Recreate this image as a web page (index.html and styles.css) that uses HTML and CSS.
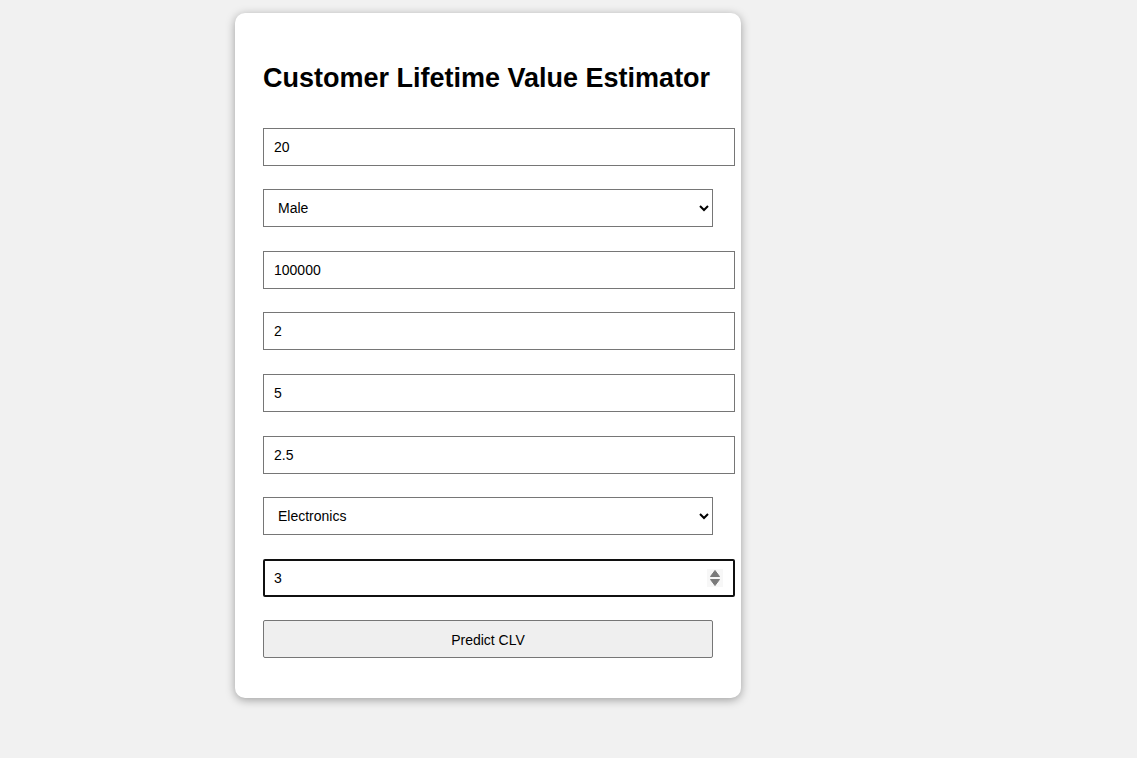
FILE: index.html
```html
<!DOCTYPE html>
<html lang="en">
<head>
<meta charset="utf-8">
<title>Customer Lifetime Value Estimator</title>
<link rel="stylesheet" href="styles.css">
</head>
<body>
  <div class="card">
    <h2 class="title">Customer Lifetime Value Estimator</h2>
    <form class="form">
      <input class="field" type="number" value="20">
      <select class="choice">
        <option>Male</option>
        <option>Female</option>
      </select>
      <input class="field" type="number" value="100000">
      <input class="field" type="number" value="2">
      <input class="field" type="number" value="5">
      <input class="field" type="number" value="2.5">
      <select class="choice">
        <option>Electronics</option>
        <option>Clothing</option>
      </select>
      <div class="spin-wrap">
        <input class="field field-focus" type="number" value="3">
        <svg class="spinner" width="16" height="18" viewBox="0 0 16 18" aria-hidden="true">
          <rect x="0" y="0" width="16" height="18" fill="#f7f7f7"/>
          <path d="M8 1.5 L12.5 7.5 L3.5 7.5 Z" fill="#7a7a7a" stroke="#7a7a7a" stroke-width="1" stroke-linejoin="round"/>
          <path d="M3.5 10.5 L12.5 10.5 L8 16.5 Z" fill="#7a7a7a" stroke="#7a7a7a" stroke-width="1" stroke-linejoin="round"/>
        </svg>
      </div>
      <button class="btn" type="button">Predict CLV</button>
    </form>
  </div>
</body>
</html>
```
FILE: styles.css
```css
html, body {
  margin: 0;
  padding: 0;
}
body {
  background: #f1f1f1;
  font-family: "Liberation Sans", Arial, sans-serif;
  color: #000;
  min-height: 758px;
}
.card {
  box-sizing: border-box;
  width: 506px;
  height: 685px;
  margin: 13px 0 0 235px;
  padding: 28px 28px 40px;
  background: #fff;
  border-radius: 10px;
  box-shadow: 0 2px 10px rgba(0, 0, 0, 0.35);
}
.title {
  margin: 22px 0 33.8px;
  font-size: 27px;
  font-weight: bold;
  line-height: 31px;
  white-space: nowrap;
}
.form {
  display: flex;
  flex-direction: column;
  align-items: flex-start;
  gap: 23.55px;
}
.field {
  display: block;
  box-sizing: content-box;
  width: 450px;
  height: 16px;
  margin: 0;
  padding: 10px;
  border: 1px solid #767676;
  border-radius: 0;
  background: #fff;
  font-family: "Liberation Sans", Arial, sans-serif;
  font-size: 14px;
  line-height: 16px;
  color: #000;
  -moz-appearance: textfield;
  appearance: textfield;
}
.field::-webkit-inner-spin-button,
.field::-webkit-outer-spin-button {
  -webkit-appearance: none;
  margin: 0;
}
.field-focus {
  border: 2px solid #101010;
  border-radius: 2px;
  padding: 9px;
  outline: none;
}
.spin-wrap {
  position: relative;
}
.spinner {
  position: absolute;
  top: 10px;
  left: 444px;
}
.choice {
  display: block;
  box-sizing: border-box;
  width: 450px;
  height: 38px;
  margin: 0;
  padding: 0 10px;
  border: 1px solid #767676;
  border-radius: 0;
  background: #fff;
  font-family: "Liberation Sans", Arial, sans-serif;
  font-size: 14px;
  color: #000;
}
.btn {
  display: block;
  box-sizing: border-box;
  width: 450px;
  height: 38px;
  margin: 0;
  padding: 11px 10px 9px;
  border: 1px solid #767676;
  border-radius: 2px;
  background: #efefef;
  font-family: "Liberation Sans", Arial, sans-serif;
  font-size: 14px;
  line-height: 16px;
  color: #000;
}
```
